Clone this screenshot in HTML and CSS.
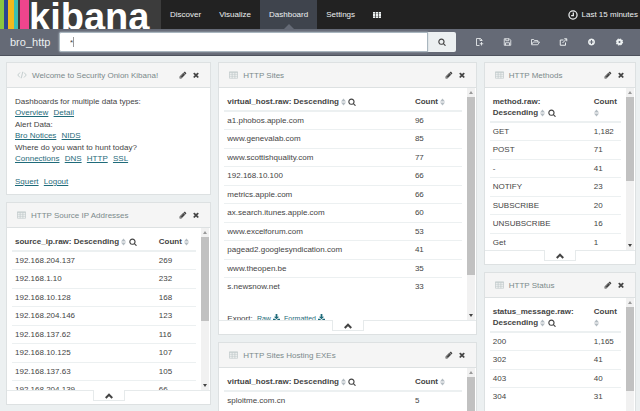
FILE: index.html
```html
<!DOCTYPE html>
<html lang="en">
<head>
    <meta charset="UTF-8">
    <meta name="viewport" content="width=device-width, initial-scale=1.0">
    <title>bro_http - Dashboard - Kibana</title>
    <link rel="stylesheet" href="styles.css">
</head>
<body>
    <svg class="sprite" aria-hidden="true">
        <symbol id="search" viewBox="0 0 1792 1792"><path d="M1216 832q0-185-131.500-316.500t-316.500-131.500-316.500 131.500-131.500 316.500 131.500 316.500 316.500 131.500 316.500-131.500 131.500-316.500zm512 832q0 52-38 90t-90 38q-54 0-90-38l-343-342q-179 124-399 124-143 0-273.500-55.500t-225-150-150-225-55.500-273.500 55.500-273.500 150-225 225-150 273.500-55.500 273.500 55.500 225 150 150 225 55.500 273.500q0 220-124 399l343 343q37 37 37 90z"/></symbol>
        <symbol id="times" viewBox="0 0 1792 1792"><path d="M1490 1322q0 40-28 68l-136 136q-28 28-68 28t-68-28l-294-294-294 294q-28 28-68 28t-68-28l-136-136q-28-28-28-68t28-68l294-294-294-294q-28-28-28-68t28-68l136-136q28-28 68-28t68 28l294 294 294-294q28-28 68-28t68 28l136 136q28 28 28 68t-28 68l-294 294 294 294q28 28 28 68z"/></symbol>
        <symbol id="pencil" viewBox="0 0 1792 1792"><path d="M491 1536l91-91-235-235-91 91v107h128v128h107zm523-928q0-22-22-22-10 0-17 7l-542 542q-7 7-7 17 0 22 22 22 10 0 17-7l542-542q7-7 7-17zm-54-192l416 416-832 832h-416v-416zm683 96q0 53-37 90l-166 166-416-416 166-165q36-38 90-38 53 0 91 38l235 234q37 39 37 91z"/></symbol>
        <symbol id="plus" viewBox="0 0 1792 1792"><path d="M1344 960v-128q0-26-19-45t-45-19h-256v-256q0-26-19-45t-45-19h-128q-26 0-45 19t-19 45v256h-256q-26 0-45 19t-19 45v128q0 26 19 45t45 19h256v256q0 26 19 45t45 19h128q26 0 45-19t19-45v-256h256q26 0 45-19t19-45zm320-64q0 209-103 385.500t-279.500 279.500-385.500 103-385.500-103-279.500-279.500-103-385.500 103-385.500 279.500-279.500 385.500-103 385.500 103 279.500 279.500 103 385.500z"/></symbol>
        <symbol id="th" viewBox="0 0 18 16"><path d="M0 1h5v4H0zM6.500 1h5v4h-5zM13 1h5v4h-5zM0 6h5v4H0zM6.500 6h5v4h-5zM13 6h5v4h-5zM0 11h5v4H0zM6.500 11h5v4h-5zM13 11h5v4h-5z"/></symbol>
        <symbol id="clock" viewBox="0 0 16 16"><path d="M8 1.500a6.500 6.500 0 1 0 0 13a6.500 6.500 0 1 0 0-13M8.500 4v4.800H5" fill="none" stroke="currentColor" stroke-width="2"/></symbol>
        <symbol id="new" viewBox="0 0 16 16"><path d="M13 6V4L10 1H2v14h6M9 1v4h4M12 8v7M8.500 11.500h7" fill="none" stroke="currentColor" stroke-width="1.700"/></symbol>
        <symbol id="save" viewBox="0 0 16 16"><path d="M1.500 1.500h10l3 3v10h-13zM4.500 1.500v4h6v-4M4 14.500v-5h8v5" fill="none" stroke="currentColor" stroke-width="1.700"/></symbol>
        <symbol id="open" viewBox="0 0 18 16"><path d="M1 12V3h4.500l1.500 2h6.500v3M1 13.500l3.500-5.500H17l-3.500 5.500z" fill="none" stroke="currentColor" stroke-width="1.700"/></symbol>
        <symbol id="share" viewBox="0 0 16 16"><path d="M8 4H1.500v10.500H12V9M6 10l8-8M9.500 1.500h5v5" fill="none" stroke="currentColor" stroke-width="2"/></symbol>
        <symbol id="cog" viewBox="0 0 16 16"><circle cx="8" cy="8" r="4" fill="none" stroke="currentColor" stroke-width="4"/><circle cx="8" cy="8" r="6" fill="none" stroke="currentColor" stroke-width="2.500" stroke-dasharray="2.700 2"/></symbol>
        <symbol id="table" viewBox="0 0 18 16"><path d="M1 1.500h16v13H1zM1 3h16M1 6.500h16M1 10.500h16M6.300 3v11.500M11.700 3v11.500" fill="none" stroke="currentColor" stroke-width="1.300"/></symbol>
        <symbol id="code" viewBox="0 0 20 16"><path d="M6 3L1.500 8L6 13M14 3l4.500 5L14 13M11.500 1.500l-3 13" fill="none" stroke="currentColor" stroke-width="1.700"/></symbol>
        <symbol id="sort" viewBox="0 0 10 16"><path d="M0 7L5 1l5 6zM0 9h10l-5 6z"/></symbol>
        <symbol id="download" viewBox="0 0 16 16"><path d="M6 0h4v6h4l-6 6-6-6h4zM0 11h4l4 3 4-3h4v5H0z"/></symbol>
        <symbol id="chevron" viewBox="0 0 16 16"><path d="M1.500 12L8 5.500L14.500 12" fill="none" stroke="currentColor" stroke-width="4"/></symbol>
    </svg>

    <header class="navbar">
        <a class="logo" href="#" aria-label="kibana">
            <span class="stripe green"></span>
            <span class="stripe blue"></span>
            <span class="stripe yellow"></span>
            <span class="stripe teal"></span>
            <span class="stripe pink"></span>
            <span class="logo-text">kibana</span>
        </a>
        <nav class="tabs">
            <a href="#">Discover</a>
            <a href="#">Visualize</a>
            <a href="#" class="active">Dashboard</a>
            <a href="#">Settings</a>
            <a href="#" aria-label="Apps"><svg class="icon"><use href="#th"/></svg></a>
        </nav>
        <button class="timepicker"><svg class="icon"><use href="#clock"/></svg>Last 15 minutes</button>
    </header>

    <div class="subnav">
        <h1>bro_http</h1>
        <form class="query">
            <div class="query-box"><input type="text" value="*" aria-label="Query"></div>
            <button type="button" aria-label="Search"><svg class="icon"><use href="#search"/></svg></button>
        </form>
        <div class="tools">
            <button aria-label="New Dashboard"><svg class="icon"><use href="#new"/></svg></button>
            <button aria-label="Save Dashboard"><svg class="icon"><use href="#save"/></svg></button>
            <button aria-label="Load Saved Dashboard"><svg class="icon"><use href="#open"/></svg></button>
            <button aria-label="Share"><svg class="icon"><use href="#share"/></svg></button>
            <button aria-label="Add Visualization"><svg class="icon"><use href="#plus"/></svg></button>
            <button aria-label="Options"><svg class="icon"><use href="#cog"/></svg></button>
        </div>
    </div>

    <main class="dashboard">
        <section class="panel welcome">
            <div class="panel-heading">
                <svg class="icon type"><use href="#code"/></svg>
                <h2>Welcome to Security Onion Kibana!</h2>
                <button aria-label="Edit"><svg class="icon"><use href="#pencil"/></svg></button>
                <button aria-label="Remove"><svg class="icon"><use href="#times"/></svg></button>
            </div>
            <div class="markdown">
                <p>Dashboards for multiple data types:<br><a href="#">Overview</a> <a href="#">Detail</a></p>
                <p>Alert Data:<br><a href="#">Bro Notices</a> <a href="#">NIDS</a></p>
                <p>Where do you want to hunt today?<br><a href="#">Connections</a> <a href="#">DNS</a> <a href="#">HTTP</a> <a href="#">SSL</a></p>
                <p><br><a href="#">Squert</a> <a href="#">Logout</a></p>
            </div>
        </section>

        <section class="panel sites">
            <div class="panel-heading">
                <svg class="icon type"><use href="#table"/></svg>
                <h2>HTTP Sites</h2>
                <button aria-label="Edit"><svg class="icon"><use href="#pencil"/></svg></button>
                <button aria-label="Remove"><svg class="icon"><use href="#times"/></svg></button>
            </div>
            <div class="panel-body">
                <div class="content">
                    <table>
                        <thead>
                            <tr><th>virtual_host.raw: Descending <svg class="icon sort"><use href="#sort"/></svg> <svg class="icon"><use href="#search"/></svg></th><th>Count <svg class="icon sort"><use href="#sort"/></svg></th></tr>
                        </thead>
                        <tbody>
                            <tr><td>a1.phobos.apple.com</td><td>96</td></tr>
                            <tr><td>www.genevalab.com</td><td>85</td></tr>
                            <tr><td>www.scottishquality.com</td><td>77</td></tr>
                            <tr><td>192.168.10.100</td><td>66</td></tr>
                            <tr><td>metrics.apple.com</td><td>66</td></tr>
                            <tr><td>ax.search.itunes.apple.com</td><td>60</td></tr>
                            <tr><td>www.excelforum.com</td><td>53</td></tr>
                            <tr><td>pagead2.googlesyndication.com</td><td>41</td></tr>
                            <tr><td>www.theopen.be</td><td>35</td></tr>
                            <tr><td>s.newsnow.net</td><td>33</td></tr>
                        </tbody>
                    </table>
                    <div class="export">Export: <a href="#">Raw <svg class="icon"><use href="#download"/></svg></a> <a href="#">Formatted <svg class="icon"><use href="#download"/></svg></a></div>
                </div>
                <div class="scrollbar"><div class="thumb"></div></div>
            </div>
            <div class="spy"><button aria-label="Show details"><svg class="icon"><use href="#chevron"/></svg></button></div>
        </section>

        <section class="panel methods">
            <div class="panel-heading">
                <svg class="icon type"><use href="#table"/></svg>
                <h2>HTTP Methods</h2>
                <button aria-label="Edit"><svg class="icon"><use href="#pencil"/></svg></button>
                <button aria-label="Remove"><svg class="icon"><use href="#times"/></svg></button>
            </div>
            <div class="panel-body">
                <div class="content">
                    <table>
                        <thead>
                            <tr><th>method.raw:<br>Descending <svg class="icon sort"><use href="#sort"/></svg> <svg class="icon"><use href="#search"/></svg></th><th>Count <svg class="icon sort"><use href="#sort"/></svg></th></tr>
                        </thead>
                        <tbody>
                            <tr><td>GET</td><td>1,182</td></tr>
                            <tr><td>POST</td><td>71</td></tr>
                            <tr><td>-</td><td>41</td></tr>
                            <tr><td>NOTIFY</td><td>23</td></tr>
                            <tr><td>SUBSCRIBE</td><td>20</td></tr>
                            <tr><td>UNSUBSCRIBE</td><td>16</td></tr>
                            <tr><td>Get</td><td>1</td></tr>
                        </tbody>
                    </table>
                </div>
                <div class="scrollbar"><div class="thumb"></div></div>
            </div>
            <div class="spy"><button aria-label="Show details"><svg class="icon"><use href="#chevron"/></svg></button></div>
        </section>

        <section class="panel source">
            <div class="panel-heading">
                <svg class="icon type"><use href="#table"/></svg>
                <h2>HTTP Source IP Addresses</h2>
                <button aria-label="Edit"><svg class="icon"><use href="#pencil"/></svg></button>
                <button aria-label="Remove"><svg class="icon"><use href="#times"/></svg></button>
            </div>
            <div class="panel-body">
                <div class="content">
                    <table>
                        <thead>
                            <tr><th>source_ip.raw: Descending <svg class="icon sort"><use href="#sort"/></svg> <svg class="icon"><use href="#search"/></svg></th><th>Count <svg class="icon sort"><use href="#sort"/></svg></th></tr>
                        </thead>
                        <tbody>
                            <tr><td>192.168.204.137</td><td>269</td></tr>
                            <tr><td>192.168.1.10</td><td>232</td></tr>
                            <tr><td>192.168.10.128</td><td>168</td></tr>
                            <tr><td>192.168.204.146</td><td>123</td></tr>
                            <tr><td>192.168.137.62</td><td>116</td></tr>
                            <tr><td>192.168.10.125</td><td>107</td></tr>
                            <tr><td>192.168.137.63</td><td>105</td></tr>
                            <tr><td>192.168.204.139</td><td>66</td></tr>
                        </tbody>
                    </table>
                </div>
                <div class="scrollbar"><div class="thumb"></div></div>
            </div>
            <div class="spy"><button aria-label="Show details"><svg class="icon"><use href="#chevron"/></svg></button></div>
        </section>

        <section class="panel status">
            <div class="panel-heading">
                <svg class="icon type"><use href="#table"/></svg>
                <h2>HTTP Status</h2>
                <button aria-label="Edit"><svg class="icon"><use href="#pencil"/></svg></button>
                <button aria-label="Remove"><svg class="icon"><use href="#times"/></svg></button>
            </div>
            <div class="panel-body">
                <div class="content">
                    <table>
                        <thead>
                            <tr><th>status_message.raw:<br>Descending <svg class="icon sort"><use href="#sort"/></svg> <svg class="icon"><use href="#search"/></svg></th><th>Count <svg class="icon sort"><use href="#sort"/></svg></th></tr>
                        </thead>
                        <tbody>
                            <tr><td>200</td><td>1,165</td></tr>
                            <tr><td>302</td><td>41</td></tr>
                            <tr><td>403</td><td>40</td></tr>
                            <tr><td>304</td><td>31</td></tr>
                        </tbody>
                    </table>
                </div>
                <div class="scrollbar"><div class="thumb"></div></div>
            </div>
            <div class="spy"><button aria-label="Show details"><svg class="icon"><use href="#chevron"/></svg></button></div>
        </section>

        <section class="panel exes">
            <div class="panel-heading">
                <svg class="icon type"><use href="#table"/></svg>
                <h2>HTTP Sites Hosting EXEs</h2>
                <button aria-label="Edit"><svg class="icon"><use href="#pencil"/></svg></button>
                <button aria-label="Remove"><svg class="icon"><use href="#times"/></svg></button>
            </div>
            <div class="panel-body">
                <div class="content">
                    <table>
                        <thead>
                            <tr><th>virtual_host.raw: Descending <svg class="icon sort"><use href="#sort"/></svg> <svg class="icon"><use href="#search"/></svg></th><th>Count <svg class="icon sort"><use href="#sort"/></svg></th></tr>
                        </thead>
                        <tbody>
                            <tr><td>sploitme.com.cn</td><td>5</td></tr>
                        </tbody>
                    </table>
                </div>
                <div class="scrollbar"><div class="thumb"></div></div>
            </div>
            <div class="spy"><button aria-label="Show details"><svg class="icon"><use href="#chevron"/></svg></button></div>
        </section>
    </main>
</body>
</html>
```

FILE: styles.css
```css
* {
    box-sizing: border-box;
}

body {
    display: flex;
    flex-direction: column;
    margin: 0;
    height: 100vh;
    overflow: hidden;
    background-color: #ecf0f1;
    color: #444;
    font-family: "Liberation Sans", Arial, sans-serif;
    font-size: 8px;
    line-height: 11px;
}

h1, h2, p {
    margin: 0;
    font-weight: normal;
}

button {
    margin: 0;
    padding: 0;
    border: 0;
    background: none;
    color: inherit;
    font: inherit;
    cursor: pointer;
}

a {
    color: #1f6b7a;
}

.sprite {
    display: none;
}

.icon {
    width: 8px;
    height: 8px;
    fill: currentColor;
    vertical-align: middle;
}

/* top bar */
.navbar {
    display: flex;
    flex: none;
    height: 29px;
    background-color: #222;
    color: #ecf0f1;
}

.logo {
    display: flex;
    width: 161px;
    overflow: hidden;
    background-color: #3c3c3c;
    color: #fff;
    text-decoration: none;
}

.stripe {
    width: 4px;
}

.green {
    background-color: #8ac640;
}

.blue {
    background-color: #2b4590;
}

.yellow {
    width: 6px;
    background-color: #f2b91c;
}

.teal {
    background-color: #3bbfb2;
}

.pink {
    width: 9px;
    margin-left: 2px;
    background-color: #ee458d;
}

.logo-text {
    font-size: 38px;
    font-weight: bold;
    line-height: 34px;
}

.tabs {
    display: flex;
}

.tabs a {
    position: relative;
    display: flex;
    align-items: center;
    padding: 0 9px;
    color: #ecf0f1;
    text-decoration: none;
}

.tabs .active {
    background-color: #3f444d;
}

.tabs .active::after {
    content: "";
    position: absolute;
    bottom: 0;
    left: 50%;
    margin-left: -5px;
    border: 5px solid transparent;
    border-top: 0;
    border-bottom-color: #656a76;
}

.timepicker {
    display: flex;
    align-items: center;
    gap: 4px;
    margin-left: auto;
    padding-right: 2px;
}

.timepicker .icon {
    width: 10px;
    height: 10px;
}

/* query bar */
.subnav {
    display: flex;
    flex: none;
    align-items: center;
    height: 27px;
    padding: 0 7px 0 10px;
    background-color: #656a76;
    border-bottom: 1px solid #4d525d;
    color: #ecf0f1;
}

.subnav h1 {
    width: 49px;
    font-size: 11px;
}

.query {
    display: flex;
    flex: 1;
    height: 20px;
}

.query-box {
    position: relative;
    flex: 1;
}

.query-box::after {
    content: "";
    position: absolute;
    top: 5px;
    left: 14px;
    width: 1px;
    height: 10px;
    background-color: #999;
}

.query input {
    width: 100%;
    height: 100%;
    padding: 0 10px;
    border: 1px solid #a9b6bf;
    border-radius: 2px 0 0 2px;
    outline: 0;
    box-shadow: 0 0 2px #b9c6cf;
    color: #444;
    font: inherit;
}

.query button {
    width: 28px;
    border-radius: 0 2px 2px 0;
    background-color: #ecf0f1;
    color: #444;
}

.tools {
    display: flex;
    margin-left: 9px;
}

.tools button {
    width: 28px;
}

.tools .icon {
    width: 9px;
}

/* panels */
.dashboard {
    display: grid;
    flex: 1;
    grid-template-columns: repeat(12, 1fr);
    grid-auto-rows: 63px;
    gap: 7px;
    min-height: 0;
    overflow: hidden;
    padding: 6px 4px 6px 6px;
}

.panel {
    display: flex;
    flex-direction: column;
    min-width: 0;
    border: 1px solid #dde1e2;
    background-color: #fff;
}

.welcome {
    grid-area: 1 / 1 / span 2 / span 4;
}

.sites {
    grid-area: 1 / 5 / span 4 / span 5;
}

.methods {
    grid-area: 1 / 10 / span 3 / span 3;
}

.source {
    grid-area: 3 / 1 / span 3 / span 4;
}

.status {
    grid-area: 4 / 10 / span 3 / span 3;
}

.exes {
    grid-area: 5 / 5 / span 3 / span 5;
}

.panel-heading {
    display: flex;
    flex: none;
    align-items: center;
    height: 25px;
    padding: 0 10px;
    border-bottom: 1px solid #dde1e2;
    background-color: #f5f5f5;
    color: #444;
}

.panel-heading h2 {
    flex: 1;
    color: #7b8a8b;
    font-size: 8px;
}

.panel-heading button {
    margin-left: 5px;
}

.type {
    width: 9px;
    margin-right: 5px;
    color: #bcc6c7;
}

.welcome .type {
    width: 10px;
}

.markdown {
    padding: 8px;
}

.markdown p {
    margin-bottom: 1px;
}

.markdown a {
    margin-right: 3px;
}

.panel-body {
    display: flex;
    flex: 1;
    min-height: 0;
}

.content {
    flex: 1;
    overflow: hidden;
    padding: 5px 5px 0;
}

table {
    width: 100%;
    border-collapse: collapse;
}

th, td {
    padding: 3px;
    border-bottom: 1px solid #ecf0f1;
    text-align: left;
}

th {
    border-bottom-width: 2px;
    vertical-align: top;
}

th:first-child {
    width: 77%;
}

.source th:first-child {
    width: 78%;
}

.sites th:first-child,
.exes th:first-child {
    width: 79%;
}

tr:nth-child(even) td {
    padding-bottom: 4px;
}

tbody tr:last-child td {
    border-bottom: 0;
}

.sort {
    width: 5px;
    color: #b4bcc2;
}

.export {
    padding: 17px 3px 0;
}

.export a {
    margin-left: 2px;
    font-size: 7px;
}

.export .icon {
    width: 7px;
    height: 7px;
    vertical-align: baseline;
}

.scrollbar {
    display: flex;
    flex-direction: column;
    justify-content: space-between;
    width: 8px;
    margin-right: 1px;
    background-color: #f1f1f1;
}

.scrollbar::before,
.scrollbar::after {
    content: "";
    margin: 3px 2px;
    border: 2px solid transparent;
}

.scrollbar::before {
    border-top: 0;
    border-bottom: 3px solid #999;
}

.scrollbar::after {
    border-bottom: 0;
    border-top: 3px solid #444;
}

.thumb {
    height: 84px;
    margin-bottom: auto;
    background-color: #c1c1c1;
}

.sites .thumb {
    height: 178px;
}

.spy {
    flex: none;
    height: 14px;
    border-top: 1px solid #e6eaeb;
    text-align: center;
}

.spy button {
    width: 32px;
    height: 11px;
    margin-top: -1px;
    border: 1px solid #e6eaeb;
    border-top: 0;
    background-color: #fff;
    vertical-align: top;
}
```
